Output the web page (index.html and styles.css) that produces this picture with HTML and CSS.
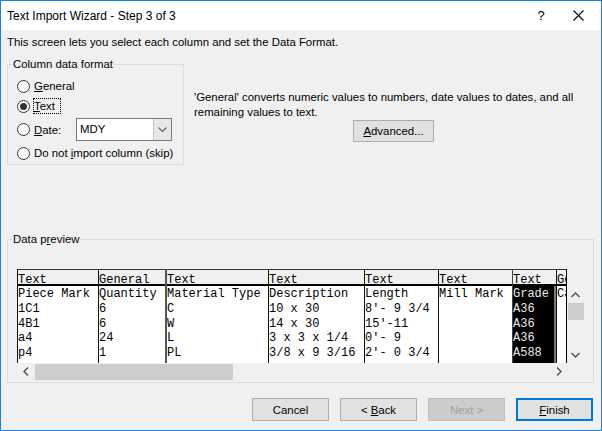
FILE: index.html
```html
<!DOCTYPE html>
<html>
<head>
<meta charset="utf-8">
<link rel="stylesheet" href="styles.css">
</head>
<body>
<div class="window">
  <div class="titlebar">
    <span class="title">Text Import Wizard - Step 3 of 3</span>
    <span class="help">?</span>
    <span class="close"><svg width="11" height="11" viewBox="0 0 11 11"><path d="M0.5 0.5 L10.5 10.5 M10.5 0.5 L0.5 10.5" stroke="#000" stroke-width="1.1" fill="none"/></svg></span>
  </div>
  <div class="content">
    <p class="intro">This screen lets you select each column and set the Data Format.</p>
    <div class="top-row">
      <fieldset class="group format">
        <legend>Column data format</legend>
        <div class="opt"><span class="radio"></span><span class="lbl"><u>G</u>eneral</span></div>
        <div class="opt"><span class="radio checked"></span><span class="lbl focus"><u>T</u>ext</span></div>
        <div class="opt date"><span class="radio"></span><span class="lbl datelbl"><u>D</u>ate:</span>
          <span class="combo"><span class="combo-val">MDY</span><span class="combo-btn"><svg width="9" height="6" viewBox="0 0 9 6"><path d="M0.5 0.5 L4.5 4.5 L8.5 0.5" stroke="#606060" stroke-width="1.1" fill="none"/></svg></span></span>
        </div>
        <div class="opt skip"><span class="radio"></span><span class="lbl">Do not <u>i</u>mport column (skip)</span></div>
      </fieldset>
      <div class="desc">
        <p class="desc-text">'General' converts numeric values to numbers, date values to dates, and all remaining values to text.</p>
        <button class="btn advanced"><u>A</u>dvanced...</button>
      </div>
    </div>
    <fieldset class="group preview">
      <legend>Data p<u>r</u>eview</legend>
      <div class="pbox">
        <div class="grid">
          <div class="col c1"><div class="h">Text</div><div class="d">Piece Mark<br>1C1<br>4B1<br>a4<br>p4</div></div>
          <div class="col c2"><div class="h">General</div><div class="d">Quantity<br>6<br>6<br>24<br>1</div></div>
          <div class="col c3"><div class="h">Text</div><div class="d">Material Type<br>C<br>W<br>L<br>PL</div></div>
          <div class="col c4"><div class="h">Text</div><div class="d">Description<br>10 x 30<br>14 x 30<br>3 x 3 x 1/4<br>3/8 x 9 3/16</div></div>
          <div class="col c5"><div class="h">Text</div><div class="d">Length<br>8'- 9 3/4<br>15'-11<br>0'- 9<br>2'- 0 3/4</div></div>
          <div class="col c6"><div class="h">Text</div><div class="d">Mill Mark</div></div>
          <div class="col c7"><div class="h">Text</div><div class="d sel">Grade<br>A36<br>A36<br>A36<br>A588</div></div>
          <div class="col c8"><div class="h">General</div><div class="d">Camber</div></div>
        </div>
        <div class="vside">
          <div class="vblank"></div>
          <div class="vscroll">
            <span class="arr"><svg width="9" height="6" viewBox="0 0 9 6"><path d="M0.5 5 L4.5 1 L8.5 5" stroke="#505050" stroke-width="1.4" fill="none"/></svg></span>
            <span class="vthumb"></span>
            <span class="vtrack"></span>
            <span class="arr"><svg width="9" height="6" viewBox="0 0 9 6"><path d="M0.5 1 L4.5 5 L8.5 1" stroke="#505050" stroke-width="1.4" fill="none"/></svg></span>
          </div>
        </div>
        <div class="hscroll">
          <span class="harr"><svg width="6" height="9" viewBox="0 0 6 9"><path d="M5 0.5 L1 4.5 L5 8.5" stroke="#505050" stroke-width="1.4" fill="none"/></svg></span>
          <span class="hthumb"></span>
          <span class="htrack"></span>
          <span class="harr"><svg width="6" height="9" viewBox="0 0 6 9"><path d="M1 0.5 L5 4.5 L1 8.5" stroke="#505050" stroke-width="1.4" fill="none"/></svg></span>
        </div>
        <div class="corner"></div>
      </div>
    </fieldset>
    <div class="buttons">
      <button class="btn">Cancel</button>
      <button class="btn">&lt; <u>B</u>ack</button>
      <button class="btn disabled">Next &gt;</button>
      <button class="btn default"><u>F</u>inish</button>
    </div>
  </div>
</div>
</body>
</html>
```
FILE: styles.css
```css
* { box-sizing: border-box; }
html, body { margin: 0; padding: 0; }
body {
  width: 602px;
  height: 431px;
  overflow: hidden;
  font-family: "Liberation Sans", Arial, sans-serif;
  font-size: 11.4px;
  color: #000;
  background: #f0f0f0;
}
u { text-decoration: underline; text-underline-offset: 1px; }
.window {
  width: 602px;
  height: 431px;
  border: 1px solid #1883d7;
  background: #f0f0f0;
  display: flex;
  flex-direction: column;
}
.titlebar {
  height: 29px;
  flex: none;
  background: #fff;
  display: flex;
  align-items: center;
  padding-left: 6px;
  font-size: 12px;
}
.title { flex: 1; }
.help {
  width: 28px;
  text-align: center;
  font-size: 13px;
}
.close {
  width: 46px;
  display: flex;
  justify-content: center;
  align-items: center;
}
.content {
  padding: 5px 8px 0 6px;
  flex: 1;
}
.intro {
  margin: 0;
  line-height: 15px;
  height: 15px;
}
.top-row {
  display: flex;
  margin-top: 7px;
}
.group {
  margin: 0;
  border: 1px solid #dcdcdc;
  min-width: 0;
}
.group legend {
  padding: 0 1px;
  margin-left: -5px;
  line-height: 15px;
}
.format {
  width: 177px;
  height: 108px;
  padding: 4px 0 0 9px;
  flex: none;
}
.opt {
  display: flex;
  align-items: center;
  height: 20px;
}
.opt.date { height: 23px; margin-top: 2px; }
.opt.skip { margin-top: 2px; }
.radio {
  width: 13px;
  height: 13px;
  border: 1px solid #333;
  border-radius: 50%;
  background: #fff;
  margin-right: 4px;
  flex: none;
  position: relative;
}
.radio.checked::after {
  content: "";
  position: absolute;
  left: 2px;
  top: 2px;
  width: 7px;
  height: 7px;
  border-radius: 50%;
  background: #333;
}
.lbl { line-height: 14px; white-space: nowrap; }
.lbl.focus {
  border: 1px dotted #000;
  margin-left: -1px;
  padding-right: 5px;
  line-height: 14px;
}
.datelbl { width: 42px; }
.combo {
  width: 96px;
  height: 23px;
  border: 1px solid #7a7a7a;
  background: #fff;
  display: flex;
}
.combo-val { flex: 1; padding-left: 3px; line-height: 21px; }
.combo-btn {
  width: 18px;
  background: #e8e8e8;
  border-left: 1px solid #c4c4c4;
  display: flex;
  justify-content: center;
  align-items: center;
}
.desc {
  margin-left: 10px;
  padding-top: 33px;
  width: 401px;
}
.desc-text { margin: 0; line-height: 15px; }
.btn {
  font-family: inherit;
  font-size: 11.4px;
  color: #000;
  background: #e1e1e1;
  border: 1px solid #adadad;
  padding: 0;
  width: 77px;
  height: 23px;
}
.advanced {
  display: block;
  margin: 0 auto;
  width: 81px;
  height: 22px;
}
.preview {
  margin-top: 67px;
  width: 587px;
  height: 151px;
  padding: 22px 0 0 9px;
}
.pbox {
  display: grid;
  grid-template-columns: 550px 17px;
  grid-template-rows: 94px 17px;
  width: 567px;
}
.grid {
  display: flex;
  border-right: 1px solid #000;
  font-family: "Liberation Mono", "Courier New", monospace;
  font-size: 12px;
  overflow: hidden;
}
.col {
  border-left: 1px solid #111;
  flex: none;
  overflow: hidden;
  white-space: nowrap;
}
.c1 { width: 81px; }
.c2 { width: 67px; }
.c3 { width: 103px; border-left: 2px solid #555; }
.c4 { width: 96px; }
.c5 { width: 74px; }
.c6 { width: 74px; }
.c7 { width: 44px; border-left-color: #444; }
.c8 { width: 10px; }
.h {
  height: 17px;
  border-top: 1px solid #333;
  border-bottom: 2px solid #000;
  padding-top: 3px;
  line-height: 14px;
  background: #f0f0f0;
}
.d {
  height: 77px;
  background: #fff;
  padding-top: 1px;
  line-height: 14.75px;
}
.d.sel {
  background: #000;
  color: #e8e8e8;
  box-shadow: inset -2px 0 0 #7a7a7a;
}
.vside {
  display: flex;
  flex-direction: column;
}
.vblank { height: 17px; flex: none; }
.vscroll {
  height: 77px;
  flex: none;
  display: flex;
  flex-direction: column;
  background: #f0f0f0;
}
.arr {
  height: 17px;
  display: flex;
  justify-content: center;
  align-items: center;
  flex: none;
}
.vthumb {
  height: 17px;
  margin-left: 1px;
  background: #cdcdcd;
  flex: none;
}
.vtrack { flex: 1; }
.hscroll {
  display: flex;
  height: 17px;
  background: #f0f0f0;
}
.harr {
  width: 17px;
  display: flex;
  justify-content: center;
  align-items: center;
  flex: none;
}
.hthumb {
  width: 198px;
  margin: 1px 0 0 1px;
  background: #cdcdcd;
  flex: none;
}
.htrack { flex: 1; }
.corner { background: #f0f0f0; }
.buttons {
  display: flex;
  justify-content: flex-end;
  gap: 11px;
  margin-top: 15px;
}
.btn.disabled {
  background: #cccccc;
  border-color: #bfbfbf;
  color: #a0a0a0;
}
.btn.default {
  border: 2px solid #0078d7;
}
```
